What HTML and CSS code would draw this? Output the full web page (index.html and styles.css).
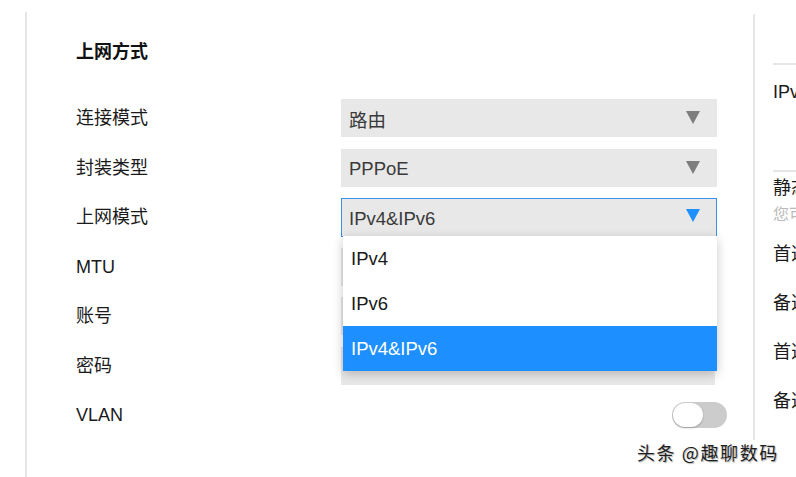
FILE: index.html
```html
<!DOCTYPE html>
<html lang="zh-CN">
<head>
<meta charset="utf-8">
<title>上网方式</title>
<link rel="stylesheet" href="styles.css">
</head>
<body>
<div class="page">
  <section class="main">
    <h2 class="title">上网方式</h2>
    <div class="form">
      <div class="row">
        <div class="label">连接模式</div>
        <div class="select"><span>路由</span><i class="arrow"></i></div>
      </div>
      <div class="row">
        <div class="label">封装类型</div>
        <div class="select"><span>PPPoE</span><i class="arrow"></i></div>
      </div>
      <div class="row">
        <div class="label">上网模式</div>
        <div class="select open"><span>IPv4&amp;IPv6</span><i class="arrow blue"></i>
          <ul class="menu">
            <li>IPv4</li>
            <li>IPv6</li>
            <li class="active">IPv4&amp;IPv6</li>
          </ul>
        </div>
      </div>
      <div class="row">
        <div class="label">MTU</div>
        <div class="input"></div>
      </div>
      <div class="row">
        <div class="label">账号</div>
        <div class="input"></div>
      </div>
      <div class="row">
        <div class="label">密码</div>
        <div class="input"></div>
      </div>
      <div class="row">
        <div class="label">VLAN</div>
        <div class="switch-wrap"><div class="switch"><div class="knob"></div></div></div>
      </div>
    </div>
  </section>
  <aside class="side">
    <div class="rule first"></div>
    <div class="side-head">IPv6</div>
    <div class="rule second"></div>
    <div class="side-title">静态DNS</div>
    <div class="side-hint">您可以手动设置</div>
    <div class="side-item">首选DNS</div>
    <div class="side-item">备选DNS</div>
    <div class="side-item">首选DNS</div>
    <div class="side-item">备选DNS</div>
  </aside>
</div>
<div class="watermark">头条 @趣聊数码</div>
</body>
</html>
```
FILE: styles.css
```css
* { box-sizing: border-box; }
html, body {
  margin: 0;
  padding: 0;
  width: 796px;
  height: 477px;
  overflow: hidden;
  background: #fff;
  font-family: "Liberation Sans", "Noto Sans CJK SC", Arial, sans-serif;
  color: #1a1a1a;
}
.page {
  display: flex;
  align-items: flex-start;
  padding-top: 12px;
  width: 1100px;
  height: 477px;
}
.main {
  margin-left: 25px;
  width: 728px;
  height: 465px;
  border-left: 2px solid #e6e6e6;
  padding-left: 49px;
}
.title {
  margin: 28px 0 29.25px;
  font-size: 18px;
  line-height: 24px;
  font-weight: bold;
  color: #111;
}
.form { display: flex; flex-direction: column; }
.row {
  height: 49.5px;
  display: flex;
  align-items: center;
}
.label {
  width: 265px;
  font-size: 18px;
  line-height: 24px;
  color: #1a1a1a;
}
.select, .input {
  position: relative;
  width: 376px;
  height: 38px;
  background: #e8e8e8;
  display: flex;
  align-items: center;
  padding-left: 8px;
  padding-top: 2px;
  font-size: 18.5px;
  color: #3a3a3a;
}
.input { width: 374px; }
.select.open {
  border: 1px solid #3a8fe6;
  padding-left: 7px;
  height: 39px;
  margin-top: 1px;
}
.arrow {
  position: absolute;
  right: 17px;
  top: 12px;
  width: 0;
  height: 0;
  border-left: 7px solid transparent;
  border-right: 7px solid transparent;
  border-top: 13px solid #7d7d7d;
}
.select.open .arrow { right: 16px; top: 10px; }
.arrow.blue { border-top-color: #1e8fff; }
.menu {
  position: absolute;
  left: 1px;
  right: -1px;
  top: 37px;
  margin: 0;
  padding: 0;
  list-style: none;
  background: #fff;
  box-shadow: 0 3px 10px rgba(0, 0, 0, 0.22);
  z-index: 5;
}
.menu li {
  height: 45px;
  line-height: 45px;
  padding-left: 8px;
  font-size: 18.5px;
  color: #1a1a1a;
}
.menu li.active {
  background: #1e8fff;
  color: #fff;
}
.switch-wrap {
  width: 386px;
  display: flex;
  justify-content: flex-end;
}
.switch {
  width: 55px;
  height: 26px;
  border-radius: 13px;
  background: #cccccc;
  padding: 1px;
}
.knob {
  width: 30px;
  height: 24px;
  border-radius: 12px;
  background: #fff;
  box-shadow: 0 1px 2px rgba(0, 0, 0, 0.25);
}
.side {
  margin-top: 2px;
  width: 300px;
  height: 426px;
  border-left: 2px solid #e6e6e6;
  padding-left: 18px;
  font-size: 18px;
  color: #1a1a1a;
}
.rule { border-top: 2px solid #e6e6e6; }
.rule.first { margin-top: 49px; }
.side-head { margin-top: 15px; line-height: 24px; }
.rule.second { margin-top: 66px; }
.side-title { margin-top: 4px; line-height: 24px; }
.side-hint { font-size: 16px; line-height: 22px; color: #bbbbbb; margin-top: 4px; }
.side-item { line-height: 24px; margin-top: 25px; }
.side-hint + .side-item { margin-top: 16px; }
.watermark {
  position: absolute;
  left: 637px;
  top: 440px;
  font-family: "Noto Sans CJK SC", sans-serif;
  font-size: 18px;
  letter-spacing: 1.6px;
  line-height: 24px;
  color: #1e1e1e;
  text-shadow: 1px 1px 1px rgba(0, 0, 0, 0.3), 0 0 2px #fff;
  white-space: nowrap;
}
```
